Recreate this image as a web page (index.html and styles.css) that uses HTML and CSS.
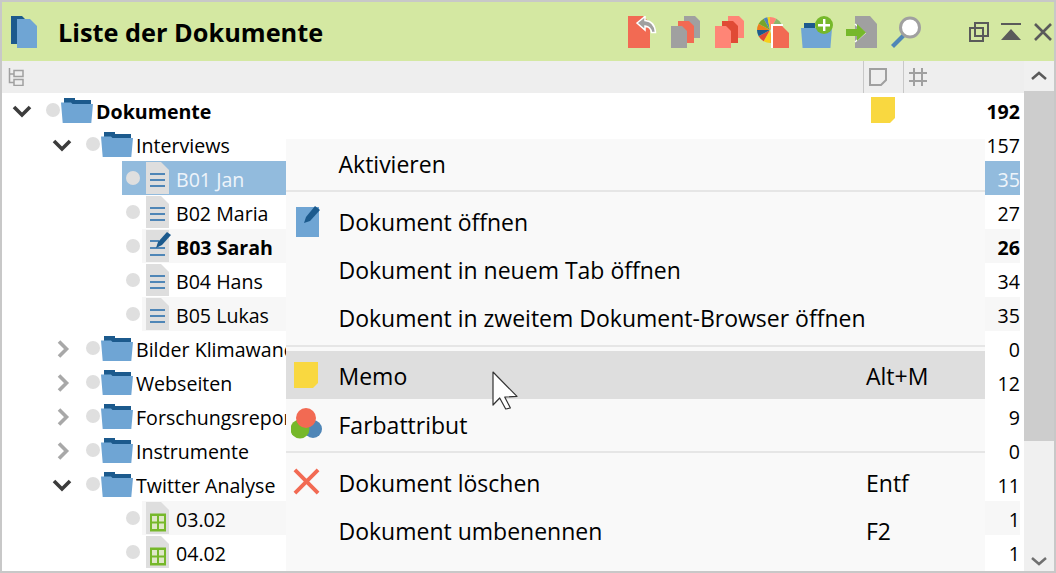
FILE: index.html
```html
<!DOCTYPE html>
<html lang="de">
<head>
<meta charset="utf-8">
<title>Liste der Dokumente</title>
<link rel="stylesheet" href="styles.css">
</head>
<body>
<svg class="defs" aria-hidden="true">
  <symbol id="folder" viewBox="0 0 32 25">
    <path d="M3 0h11v2h16v5H3z" fill="#1c5a8d"/>
    <path d="M0 4.5h10l1.5 1.5H32l-1.7 19H1.7z" fill="#6fa5d4"/>
  </symbol>
  <symbol id="doc" viewBox="0 0 23 32">
    <path d="M0 0h15l8 8v24H0z" fill="#dedede"/>
    <path d="M4 11h15v2H4zM4 17h15v2H4zM4 23h15v2H4z" fill="#4f86b7"/>
  </symbol>
  <symbol id="docedit" viewBox="0 0 26 32">
    <path d="M0 0h23v32H0z" fill="#dedede"/>
    <path d="M4 17h15v2H4zM4 24h15v2H4zM4 10h9v2H4z" fill="#4f86b7"/>
    <path d="M10 18l2-6L21 2l4 3-9 10z" fill="#1c5a8d"/>
  </symbol>
  <symbol id="sheet" viewBox="0 0 23 32">
    <path d="M0 0h15l8 8v24H0z" fill="#dedede"/>
    <path d="M4 11.500h16v18H4z" fill="#76b82a"/>
    <path d="M6 14h5v5.500H6zM13 14h5v5.500h-5zM6 21.500h5v5.500H6zM13 21.500h5v5.500h-5z" fill="#dfe8c8"/>
  </symbol>
  <symbol id="note" viewBox="0 0 24 26">
    <path d="M0 0h24v21l-5 5H0z" fill="#f9d840"/>
  </symbol>
</svg>

<main class="window">
  <header class="titlebar">
    <svg class="logo" viewBox="0 0 26 32"><path d="M0 0h11l3 3v25H0z" fill="#1c5a8d"/><path d="M6 3h13l7 7v22H6z" fill="#6fa5d4"/></svg>
    <h1 class="title">Liste der Dokumente</h1>
    <div class="tools">
      <svg class="tool tool-a" viewBox="0 0 30 32"><path d="M0 0h15l7 7v25H0z" fill="#f26a53"/><path d="M9 7l8-6.500v4c6 .5 10 4 10.500 12h-4c-.5-4-3-6-6.500-6.500v4z" fill="#a0a0a0" stroke="#fff" stroke-width="1.500"/></svg>
      <svg class="tool tool-b" viewBox="0 0 29 32"><path d="M13 0h11l5 5v17H13z" fill="#a0a0a0"/><path d="M7 5h11l5 5v17H7z" fill="#f26a53"/><path d="M0 10h11l5 5v17H0z" fill="#a0a0a0"/></svg>
      <svg class="tool tool-c" viewBox="0 0 29 32"><path d="M13 0h11l5 5v17H13z" fill="#ff8576"/><path d="M7 5h11l5 5v17H7z" fill="#e04a35"/><path d="M0 10h11l5 5v17H0z" fill="#ff8576"/></svg>
      <svg class="tool tool-d" viewBox="0 0 32 32">
        <g fill="none" stroke-width="13" transform="rotate(-90 13 14)">
          <circle cx="13" cy="14" r="6.500" pathLength="12" stroke-dasharray="1 11" stroke-dashoffset="0" stroke="#ff8576"/>
          <circle cx="13" cy="14" r="6.500" pathLength="12" stroke-dasharray="1 11" stroke-dashoffset="-1" stroke="#8cb56a"/>
          <circle cx="13" cy="14" r="6.500" pathLength="12" stroke-dasharray="1 11" stroke-dashoffset="-2" stroke="#7fcdea"/>
          <circle cx="13" cy="14" r="6.500" pathLength="12" stroke-dasharray="3 9" stroke-dashoffset="-3" stroke="#f2b32c"/>
          <circle cx="13" cy="14" r="6.500" pathLength="12" stroke-dasharray="1 11" stroke-dashoffset="-6" stroke="#f6cf1c"/>
          <circle cx="13" cy="14" r="6.500" pathLength="12" stroke-dasharray="1 11" stroke-dashoffset="-7" stroke="#e04a35"/>
          <circle cx="13" cy="14" r="6.500" pathLength="12" stroke-dasharray="1 11" stroke-dashoffset="-8" stroke="#1c5a8d"/>
          <circle cx="13" cy="14" r="6.500" pathLength="12" stroke-dasharray="1 11" stroke-dashoffset="-9" stroke="#ee7d1c"/>
          <circle cx="13" cy="14" r="6.500" pathLength="12" stroke-dasharray="1 11" stroke-dashoffset="-10" stroke="#76a52c"/>
          <circle cx="13" cy="14" r="6.500" pathLength="12" stroke-dasharray="0.6 11.4" stroke-dashoffset="-11" stroke="#4f86b7"/>
          <circle cx="13" cy="14" r="6.500" pathLength="12" stroke-dasharray="0.4 11.6" stroke-dashoffset="-11.6" stroke="#f6cf1c"/>
        </g>
        <path d="M16 10h9l7 7v15H16z" fill="#f26a53"/><path d="M15 32V9h11" fill="none" stroke="#fff" stroke-width="2"/>
      </svg>
      <svg class="tool tool-e" viewBox="0 0 32 32"><path d="M3 7h11v6H3z" fill="#1c5a8d"/><path d="M0 12h31l-1.600 20H1.600z" fill="#6fa5d4"/><circle cx="23" cy="9" r="9" fill="#76b82a"/><path d="M22 3h2.400v5H29v2.400h-4.600V15H22v-4.600h-5V8h5z" fill="#fff"/></svg>
      <svg class="tool tool-f" viewBox="0 0 32 32"><path d="M9 0h15l7 8v24H9z" fill="#a0a0a0"/><path d="M9 8l10 9-10 9" fill="none" stroke="#fff" stroke-width="1.500"/><path d="M0 13h11V8l9 8.500-9 8.500v-5H0z" fill="#76b82a"/></svg>
      <svg class="tool tool-g" viewBox="0 0 32 32"><path d="M1 29l11-11 3 3L4 32z" fill="#4f86b7"/><circle cx="20" cy="11.500" r="9.500" fill="#fff" stroke="#a0a0a0" stroke-width="3"/></svg>
    </div>
    <div class="winctl">
      <svg class="ctl ctl-a" viewBox="0 0 20 20"><path d="M6 1h13v13H6zM1 6h13v13H1z" fill="none" stroke="#5a5a5a" stroke-width="2"/></svg>
      <svg class="ctl ctl-b" viewBox="0 0 20 18"><path d="M0 0h20v2H0zM10 6l10 11H0z" fill="#5a5a5a"/></svg>
      <svg class="ctl ctl-c" viewBox="0 0 20 18"><path d="M2 1l16 16M18 1L2 17" fill="none" stroke="#5a5a5a" stroke-width="2.600"/></svg>
    </div>
  </header>

  <div class="content">
    <div class="list">
      <div class="colbar">
        <svg class="col-tree" viewBox="0 0 16 18"><path d="M1.500 0v14.500H6M1.500 6H6M6 2.500h9v6H6zM6 11.500h9v6H6z" fill="none" stroke="#a0a0a0" stroke-width="1.500"/></svg>
        <div class="col-memo"><svg class="col-icon" viewBox="0 0 18 18"><path d="M1 1h16v11l-5 5H1z" fill="none" stroke="#a0a0a0" stroke-width="2"/></svg></div>
        <div class="col-count"><svg class="col-icon" viewBox="0 0 18 18"><path d="M5 0v18M13 0v18M0 5h18M0 13h18" fill="none" stroke="#a0a0a0" stroke-width="2"/></svg></div>
      </div>

      <div class="row lv1 bold">
        <svg class="twist" viewBox="0 0 20 20"><path d="M2 6l8 8 8-8" fill="none" stroke="#3c3c3c" stroke-width="3.600"/></svg>
        <span class="dot"></span><svg class="folder"><use href="#folder"/></svg>
        <span class="label">Dokumente</span>
        <span class="memo"><svg class="note"><use href="#note"/></svg></span>
        <span class="count">192</span>
      </div>
      <div class="row lv2">
        <svg class="twist" viewBox="0 0 20 20"><path d="M2 6l8 8 8-8" fill="none" stroke="#3c3c3c" stroke-width="3.600"/></svg>
        <span class="dot"></span><svg class="folder"><use href="#folder"/></svg>
        <span class="label">Interviews</span><span class="memo"></span><span class="count">157</span>
      </div>
      <div class="row lv3 selected">
        <span class="dot"></span>
        <div class="cell"><svg class="doc"><use href="#doc"/></svg><span class="label">B01 Jan</span><span class="memo"></span><span class="count">35</span></div>
      </div>
      <div class="row lv3">
        <span class="dot"></span>
        <div class="cell"><svg class="doc"><use href="#doc"/></svg><span class="label">B02 Maria</span><span class="memo"></span><span class="count">27</span></div>
      </div>
      <div class="row lv3 bold">
        <span class="dot"></span>
        <div class="cell alt"><svg class="doc wide"><use href="#docedit"/></svg><span class="label">B03 Sarah</span><span class="memo"></span><span class="count">26</span></div>
      </div>
      <div class="row lv3">
        <span class="dot"></span>
        <div class="cell"><svg class="doc"><use href="#doc"/></svg><span class="label">B04 Hans</span><span class="memo"></span><span class="count">34</span></div>
      </div>
      <div class="row lv3">
        <span class="dot"></span>
        <div class="cell alt"><svg class="doc"><use href="#doc"/></svg><span class="label">B05 Lukas</span><span class="memo"></span><span class="count">35</span></div>
      </div>
      <div class="row lv2">
        <svg class="twist" viewBox="0 0 20 20"><path d="M7 2.500l7.500 7.500-7.500 7.500" fill="none" stroke="#a8a8a8" stroke-width="3.600"/></svg>
        <span class="dot"></span><svg class="folder"><use href="#folder"/></svg>
        <span class="label">Bilder Klimawandel</span><span class="memo"></span><span class="count">0</span>
      </div>
      <div class="row lv2">
        <svg class="twist" viewBox="0 0 20 20"><path d="M7 2.500l7.500 7.500-7.500 7.500" fill="none" stroke="#a8a8a8" stroke-width="3.600"/></svg>
        <span class="dot"></span><svg class="folder"><use href="#folder"/></svg>
        <span class="label">Webseiten</span><span class="memo"></span><span class="count">12</span>
      </div>
      <div class="row lv2">
        <svg class="twist" viewBox="0 0 20 20"><path d="M7 2.500l7.500 7.500-7.500 7.500" fill="none" stroke="#a8a8a8" stroke-width="3.600"/></svg>
        <span class="dot"></span><svg class="folder"><use href="#folder"/></svg>
        <span class="label">Forschungsreporte</span><span class="memo"></span><span class="count">9</span>
      </div>
      <div class="row lv2">
        <svg class="twist" viewBox="0 0 20 20"><path d="M7 2.500l7.500 7.500-7.500 7.500" fill="none" stroke="#a8a8a8" stroke-width="3.600"/></svg>
        <span class="dot"></span><svg class="folder"><use href="#folder"/></svg>
        <span class="label">Instrumente</span><span class="memo"></span><span class="count">0</span>
      </div>
      <div class="row lv2">
        <svg class="twist" viewBox="0 0 20 20"><path d="M2 6l8 8 8-8" fill="none" stroke="#3c3c3c" stroke-width="3.600"/></svg>
        <span class="dot"></span><svg class="folder"><use href="#folder"/></svg>
        <span class="label">Twitter Analyse</span><span class="memo"></span><span class="count">11</span>
      </div>
      <div class="row lv3">
        <span class="dot"></span>
        <div class="cell alt"><svg class="doc"><use href="#sheet"/></svg><span class="label">03.02</span><span class="memo"></span><span class="count">1</span></div>
      </div>
      <div class="row lv3">
        <span class="dot"></span>
        <div class="cell"><svg class="doc"><use href="#sheet"/></svg><span class="label">04.02</span><span class="memo"></span><span class="count">1</span></div>
      </div>
    </div>

    <div class="scrollbar">
      <div class="sb-btn"><svg class="sb-arrow" viewBox="0 0 16 10"><path d="M1 8l7-6 7 6" fill="none" stroke="#5a5a5a" stroke-width="2.500"/></svg></div>
      <div class="sb-thumb"></div>
      <div class="sb-rest"><svg class="sb-arrow" viewBox="0 0 16 10"><path d="M1 2l7 6 7-6" fill="none" stroke="#707070" stroke-width="2.500"/></svg></div>
    </div>
  </div>

  <nav class="menu">
    <div class="item"><span class="mi"></span><span class="mt">Aktivieren</span></div>
    <div class="sep sep-a"></div>
    <div class="item"><span class="mi"><svg class="mi-edit" viewBox="0 0 25 31"><path d="M1 1h16l7 0v30H1z" fill="#6fa5d4"/><path d="M9 17l2-6L20 0l5 4-10 11z" fill="#1c5a8d"/></svg></span><span class="mt">Dokument öffnen</span></div>
    <div class="item"><span class="mi"></span><span class="mt">Dokument in neuem Tab öffnen</span></div>
    <div class="item"><span class="mi"></span><span class="mt">Dokument in zweitem Dokument-Browser öffnen</span></div>
    <div class="sep sep-b"></div>
    <div class="item active"><span class="mi"><svg class="mi-note"><use href="#note"/></svg></span><span class="mt">Memo</span><span class="ms">Alt+M</span></div>
    <div class="item item-farb"><span class="mi"><svg class="mi-color" viewBox="0 0 31 31"><circle cx="22" cy="21" r="9" fill="#4f86b7"/><circle cx="9" cy="21" r="9.500" fill="#76b82a"/><circle cx="15" cy="10" r="10" fill="#f26a53"/></svg></span><span class="mt">Farbattribut</span></div>
    <div class="sep sep-c"></div>
    <div class="item"><span class="mi"><svg class="mi-x" viewBox="0 0 28 28"><path d="M2 2l24 24M26 2L2 26" fill="none" stroke="#f26a53" stroke-width="4"/></svg></span><span class="mt">Dokument löschen</span><span class="ms">Entf</span></div>
    <div class="item"><span class="mi"></span><span class="mt">Dokument umbenennen</span><span class="ms">F2</span></div>
    <div class="item item-last"><span class="mi"></span><span class="mt">Dokument drucken</span></div>
  </nav>

  <svg class="cursor" viewBox="0 0 26 39"><path d="M1 1l24 24.400-12.300.6 5.700 11-4.700 1-6-11L1 34z" fill="#fff" stroke="#333" stroke-width="1.200" stroke-linejoin="round"/></svg>
</main>
</body>
</html>
```

FILE: styles.css
```css
html, body {
  margin: 0;
  padding: 0;
  background: #fff;
}
body {
  font-family: "Open Sans", "Noto Sans", sans-serif;
  color: #000;
}
.defs {
  position: absolute;
  width: 0;
  height: 0;
}
.window {
  position: relative;
  box-sizing: border-box;
  width: 1056px;
  height: 573px;
  border: 2px solid #c8c8c8;
  display: flex;
  flex-direction: column;
  overflow: hidden;
  background: #fff;
}

/* title bar */
.titlebar {
  flex: none;
  height: 59px;
  background: #d4e8a2;
  display: flex;
  align-items: center;
}
.logo {
  width: 26px;
  height: 32px;
  margin-left: 9px;
  flex: none;
}
.title {
  margin: 0 0 0 21px;
  font-size: 25.300px;
  font-weight: 700;
  line-height: 34px;
  white-space: nowrap;
}
.tools {
  display: flex;
  margin-left: auto;
  height: 32px;
  align-items: flex-start;
}
.tool { height: 32px; flex: none; }
.tool-a { width: 30px; margin-right: 13px; }
.tool-b { width: 29px; margin-right: 15px; }
.tool-c { width: 29px; margin-right: 13px; }
.tool-d { width: 32px; margin-right: 12px; }
.tool-e { width: 32px; margin-right: 13px; }
.tool-f { width: 32px; margin-right: 12px; }
.tool-g { width: 32px; margin-right: 47px; }
.winctl {
  display: flex;
  align-items: center;
  margin-right: 1px;
  gap: 12px;
}
.ctl { flex: none; width: 20px; }
.ctl-a { height: 20px; }
.ctl-b, .ctl-c { height: 18px; }

/* list */
.content {
  flex: 1;
  display: flex;
  min-height: 0;
}
.list {
  flex: 1;
  min-width: 0;
}
.colbar {
  height: 32px;
  background: #eeeeee;
  display: flex;
  align-items: center;
  margin-right: -4px;
}
.col-tree {
  width: 16px;
  height: 18px;
  margin-left: 6px;
  margin-right: auto;
}
.col-memo, .col-count {
  height: 32px;
  box-sizing: border-box;
  border-left: 1px solid #c8c8c8;
  display: flex;
  align-items: center;
  padding-left: 5px;
}
.col-memo { width: 40px; }
.col-count { width: 121px; }
.col-icon { width: 18px; height: 18px; }

.row {
  height: 34px;
  display: flex;
  align-items: center;
  font-size: 19.600px;
  white-space: nowrap;
}
.bold { font-weight: 700; }
.lv1 { padding-left: 10px; }
.lv2 { padding-left: 50px; }
.lv3 { margin-left: 120px; }
.twist {
  width: 20px;
  height: 20px;
  flex: none;
  margin: 2px 14px 0 0;
}
.dot {
  flex: none;
  width: 14px;
  height: 14px;
  border-radius: 50%;
  background: #dfdfdf;
}
.lv3 .dot { margin-left: 4px; margin-right: 2px; }
.folder {
  flex: none;
  width: 32px;
  height: 25px;
  margin: 0 3px 0 1px;
}
.cell {
  flex: 1;
  min-width: 0;
  height: 34px;
  display: flex;
  align-items: center;
}
.alt { background: #f7f7f7; }
.selected { background: #92bbdd; color: #eef4fa; }
.doc {
  flex: none;
  width: 23px;
  height: 32px;
  margin: 0 7px 0 4px;
}
.doc.wide { width: 26px; margin-right: 4px; }
.label, .count { padding-top: 3px; }
.label {
  flex: 1;
  min-width: 0;
  overflow: hidden;
}
.memo {
  flex: none;
  width: 40px;
  height: 34px;
  padding-left: 7px;
  box-sizing: border-box;
  display: flex;
  align-items: center;
}
.note { width: 24px; height: 26px; }
.count {
  flex: none;
  width: 116px;
  text-align: right;
}

/* scrollbar */
.scrollbar {
  flex: none;
  width: 30px;
  margin-left: 4px;
  display: flex;
  flex-direction: column;
  background: #f0f0f0;
}
.sb-btn {
  height: 30px;
  display: flex;
  align-items: center;
  justify-content: center;
}
.sb-thumb {
  height: 350px;
  background: #cdcdcd;
}
.sb-rest {
  flex: 1;
  display: flex;
  align-items: flex-end;
  justify-content: center;
  padding-bottom: 5px;
}
.sb-arrow { width: 16px; height: 10px; }

/* context menu */
.menu {
  position: absolute;
  left: 284px;
  top: 137px;
  width: 699px;
  height: 432px;
  padding-top: 1px;
  box-sizing: border-box;
  background: #f9f9f9;
  overflow: hidden;
  font-size: 23px;
}
.item {
  height: 48px;
  display: flex;
  align-items: center;
  white-space: nowrap;
}
.item.active { background: #dedede; }
.item.active .mt, .item.active .ms { padding-top: 2px; }
.item-farb { margin-top: 2px; }
.item-last .mt { padding-top: 4px; }
.mi {
  flex: none;
  width: 52.500px;
  display: flex;
  align-items: center;
}
.mt { width: 527.500px; }
.ms { width: 100px; }
.sep { background: #e6e6e6; height: 2px; }
.sep-a { margin: 2px 0 6px; }
.sep-b { margin: 3px 0 4px; }
.sep-c { margin: 2px 0 6px; }
.mi-edit { width: 25px; height: 31px; margin-left: 9px; margin-top: -2px; }
.mi-note { width: 24px; height: 26px; margin-left: 8px; margin-top: -1px; }
.mi-color { width: 31px; height: 31px; margin-left: 5px; margin-top: -4px; }
.mi-x { width: 27px; height: 27px; margin-left: 6.500px; margin-top: -3px; }

.cursor {
  position: absolute;
  left: 490px;
  top: 369px;
  width: 26px;
  height: 39px;
}
```
